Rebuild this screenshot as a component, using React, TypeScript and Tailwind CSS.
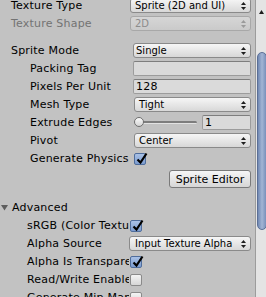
import React from "react";

const font = "font-['DejaVu_Sans',sans-serif]";

function Arrows({ disabled }: { disabled?: boolean }) {
  const c = disabled ? "#9a9a9a" : "#1e1e1e";
  return (
    <svg className="shrink-0" width="5" height="8" viewBox="0 0 5 8">
      <path d="M0 3 L2.5 0 L5 3 Z" fill={c} />
      <path d="M0 5 L2.5 8 L5 5 Z" fill={c} />
    </svg>
  );
}

function Popup({ value, disabled, pad = 4 }: { value: string; disabled?: boolean; pad?: number }) {
  return (
    <div
      className={`h-[15px] flex items-center justify-between rounded-[3px] border pr-[4px] text-[10px] tracking-normal ${
        disabled
          ? "border-[#a8a8a8] bg-gradient-to-b from-[#d6d6d6] to-[#cacaca] text-[#8c8c8c]"
          : "border-[#8a8a8a] bg-gradient-to-b from-[#f6f6f6] to-[#d8d8d8] text-black"
      }`}
      style={{ paddingLeft: pad }}
    >
      <span className="whitespace-nowrap shrink-0">{value}</span>
      <Arrows disabled={disabled} />
    </div>
  );
}

function Field({ value }: { value?: string }) {
  return (
    <div className="h-[15px] flex items-center rounded-[2px] border border-[#9c9c9c] border-t-[#7e7e7e] bg-[#dadada] pl-[2px] text-black">
      {value}
    </div>
  );
}

function Check({ on }: { on?: boolean }) {
  return (
    <div
      className={`relative ml-[1px] w-[12px] h-[12px] rounded-[2px] border ${
        on
          ? "border-[#4f6d9c] bg-gradient-to-b from-[#a9c1e6] to-[#7c9ccf]"
          : "border-[#8a8a8a] bg-gradient-to-b from-[#f4f4f4] to-[#d6d6d6]"
      }`}
    >
      {on && (
        <svg className="absolute left-[1px] top-[-2px]" width="12" height="13" viewBox="0 0 12 13">
          <path d="M1.5 7.5 L4.5 10.5 L10.5 1.5" stroke="#000" strokeWidth="2.2" fill="none" />
        </svg>
      )}
    </div>
  );
}

function Row({
  label,
  indent,
  labelWidth = 133,
  disabled,
  children,
}: {
  label: string;
  indent: number;
  labelWidth?: number;
  disabled?: boolean;
  children?: React.ReactNode;
}) {
  return (
    <div className="h-[15px] flex items-center">
      <div
        className={`shrink-0 overflow-hidden whitespace-nowrap ${disabled ? "text-[#737373]" : "text-black"}`}
        style={{ width: labelWidth, paddingLeft: indent }}
      >
        {label}
      </div>
      <div className="flex-1 min-w-0">{children}</div>
    </div>
  );
}

export default function App() {
  return (
    <div
      className={`${font} text-[11px] leading-[15px] tracking-[0.2px] w-[266px] h-[297px] overflow-hidden bg-[#c2c2c2] flex`}
    >
      <div className="w-[255px] pr-[4px] flex flex-col">
        <div className="mt-[-2px] flex flex-col gap-[3px]">
          <Row label="Texture Type" indent={11} labelWidth={130}>
            <Popup value="Sprite (2D and UI)" />
          </Row>
          <Row label="Texture Shape" indent={11} labelWidth={130} disabled>
            <Popup value="2D" disabled />
          </Row>
        </div>

        <div className="mt-[12px] flex flex-col gap-[3px]">
          <Row label="Sprite Mode" indent={11}>
            <Popup value="Single" pad={2} />
          </Row>
          <Row label="Packing Tag" indent={30}>
            <Field />
          </Row>
          <Row label="Pixels Per Unit" indent={30}>
            <Field value="128" />
          </Row>
          <Row label="Mesh Type" indent={30} labelWidth={134}>
            <Popup value="Tight" />
          </Row>
          <Row label="Extrude Edges" indent={30}>
            <div className="flex items-center">
              <div className="relative w-[66px] h-[15px] flex items-center">
                <div className="ml-[2px] w-[62px] h-[3px] rounded-full bg-[#7d7d7d] border-b border-[#e2e2e2]" />
                <div className="absolute left-[1px] top-[2px] w-[10px] h-[10px] rounded-full border border-[#6f6f6f] bg-gradient-to-b from-[#fafafa] to-[#d4d4d4]" />
              </div>
              <div className="ml-[3px] flex-1">
                <Field value="1" />
              </div>
            </div>
          </Row>
          <Row label="Pivot" indent={30} labelWidth={134}>
            <Popup value="Center" />
          </Row>
          <Row label="Generate Physics" indent={30}>
            <Check on />
          </Row>
        </div>

        <div className="mt-[4px] flex justify-end">
          <div className="w-[82px] h-[18px] flex items-center justify-center rounded-[3px] border border-[#7a7a7a] bg-gradient-to-b from-[#f6f6f6] to-[#d6d6d6] text-black tracking-normal">
            Sprite Editor
          </div>
        </div>

        <div className="mt-[12px] h-[15px] flex items-center text-black">
          <svg className="ml-[1px] mr-[4px]" width="7" height="6" viewBox="0 0 7 6">
            <path d="M0 0 L7 0 L3.5 5.5 Z" fill="#5e5e5e" />
          </svg>
          Advanced
        </div>

        <div className="mt-[3px] flex flex-col gap-[3px]">
          <Row label="sRGB (Color Texture)" indent={27} labelWidth={129}>
            <Check on />
          </Row>
          <Row label="Alpha Source" indent={27} labelWidth={129}>
            <Popup value="Input Texture Alpha" pad={5} />
          </Row>
          <Row label="Alpha Is Transparency" indent={27} labelWidth={129}>
            <Check on />
          </Row>
          <Row label="Read/Write Enabled" indent={27} labelWidth={129}>
            <Check />
          </Row>
          <Row label="Generate Mip Maps" indent={27} labelWidth={129}>
            <Check />
          </Row>
        </div>
      </div>

      <div className="w-[11px] h-full flex flex-col border-l border-[#9c9c9c] bg-[#e4e4e4]">
        <div className="h-[17px] flex items-end justify-center pb-[3px]">
          <svg width="5" height="4" viewBox="0 0 5 4">
            <path d="M0 4 L2.5 0 L5 4 Z" fill="#1e1e1e" />
          </svg>
        </div>
        <div className="mt-[35px] ml-[1px] w-[10px] h-[178px] rounded-[5px] border border-[#5b6f96] bg-gradient-to-r from-[#7088b3] via-[#a3b5d4] to-[#7a90ba]" />
      </div>
    </div>
  );
}
